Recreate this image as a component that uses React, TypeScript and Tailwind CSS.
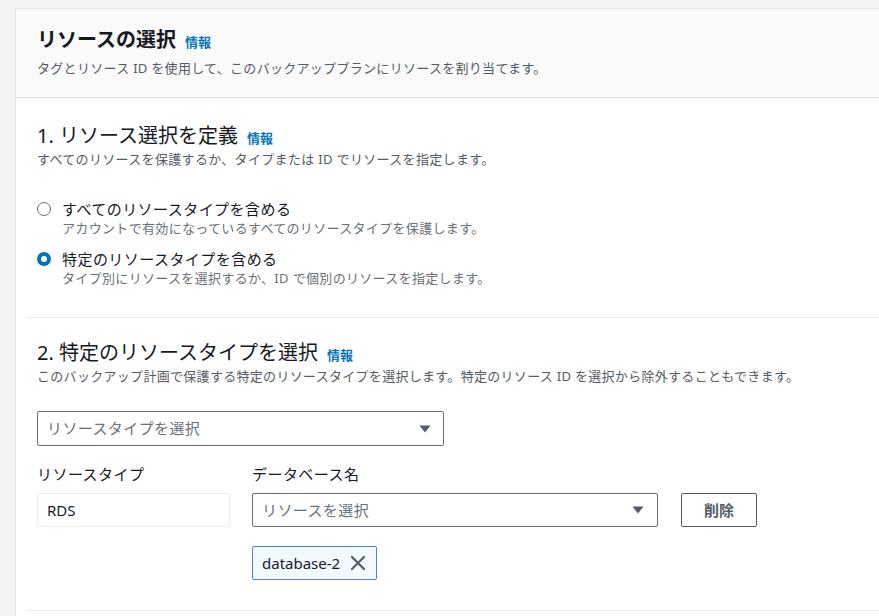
import React from "react";

const Info = () => (
  <a className="ml-[9px] text-[13px] font-bold text-[#0073bb] leading-none">情報</a>
);

const Caret = () => (
  <svg width="12" height="8" viewBox="0 0 12 8" className="shrink-0">
    <path d="M0.5 0.5 L11.5 0.5 L6 7.5 Z" fill="#545b64" />
  </svg>
);

export default function App() {
  return (
    <div className="min-h-screen bg-[#f2f3f3] pt-2 pl-[15px] font-['Noto_Sans','Noto_Sans_CJK_JP',sans-serif] text-[#16191f]">
      <div className="bg-white border-l border-t border-[#e4e7e7] min-h-[608px]">
        {/* header */}
        <div className="bg-[#fafafa] border-b border-[#e1e4e4] pl-[21px] pt-[17px] pb-[19px]">
          <div className="flex items-baseline h-[28px] leading-[28px]">
            <h2 className="text-[20px] font-bold">リソースの選択</h2>
            <Info />
          </div>
          <p className="mt-[4px] text-[13px] tracking-[0.3px] leading-[20px] text-[#545b64]">
            タグとリソース ID を使用して、このバックアップブランにリソースを割り当てます。
          </p>
        </div>

        {/* body */}
        <div className="pl-[10px] pt-[25px]">
          {/* section 1 */}
          <div className="pl-[11px] pb-[30px] border-b border-[#eaeded]">
            <div className="flex items-baseline h-[26px] leading-[26px]">
              <h3 className="text-[20px] font-normal">1. リソース選択を定義</h3>
              <Info />
            </div>
            <p className="text-[13px] tracking-[0.33px] leading-[20px] text-[#545b64]">
              すべてのリソースを保護するか、タイプまたは ID でリソースを指定します。
            </p>

            <div className="mt-[30px] flex flex-col gap-[12px]">
              <div className="flex">
                <div className="w-[25px] h-[20px] flex items-center">
                  <span className="block w-[14px] h-[14px] rounded-full border-[1.5px] border-[#687078] bg-white" />
                </div>
                <div>
                  <div className="text-[15px] tracking-[0.45px] leading-[20px]">すべてのリソースタイプを含める</div>
                  <div className="text-[13px] tracking-[0.33px] leading-[18px] text-[#687078]">
                    アカウントで有効になっているすべてのリソースタイプを保護します。
                  </div>
                </div>
              </div>
              <div className="flex">
                <div className="w-[25px] h-[20px] flex items-center">
                  <span className="block w-[14px] h-[14px] rounded-full border-[4px] border-[#0073bb] bg-white" />
                </div>
                <div>
                  <div className="text-[15px] tracking-[0.45px] leading-[20px]">特定のリソースタイプを含める</div>
                  <div className="text-[13px] tracking-[0.33px] leading-[18px] text-[#687078]">
                    タイプ別にリソースを選択するか、ID で個別のリソースを指定します。
                  </div>
                </div>
              </div>
            </div>
          </div>

          {/* section 2 */}
          <div className="pl-[11px] pt-[22px] pb-[30px] border-b border-[#eaeded]">
            <div className="flex items-baseline h-[26px] leading-[26px]">
              <h3 className="text-[20px] font-normal">2. 特定のリソースタイプを選択</h3>
              <Info />
            </div>
            <p className="text-[13px] tracking-[0.3px] leading-[20px] text-[#545b64]">
              このバックアップ計画で保護する特定のリソースタイプを選択します。特定のリソース ID を選択から除外することもできます。
            </p>

            <div className="mt-[25px] w-[407px] h-[35px] border border-[#687078] rounded-[2px] flex items-center justify-between pl-[9px] pr-[12px]">
              <span className="text-[15px] tracking-[0.4px] text-[#687078]">リソースタイプを選択</span>
              <Caret />
            </div>

            <div className="mt-[17px] flex gap-[22px]">
              <div className="w-[193px]">
                <div className="text-[15px] tracking-[0.45px] leading-[22px]">リソースタイプ</div>
                <div className="mt-[8px] h-[34px] border border-[#eaeded] rounded-[2px] flex items-center pl-[9px] text-[15px]">
                  RDS
                </div>
              </div>
              <div className="w-[406px]">
                <div className="text-[15px] tracking-[0.45px] leading-[22px]">データベース名</div>
                <div className="mt-[8px] h-[34px] border border-[#687078] rounded-[2px] flex items-center justify-between pl-[9px] pr-[13px]">
                  <span className="text-[15px] tracking-[0.4px] text-[#687078]">リソースを選択</span>
                  <Caret />
                </div>
                <div className="mt-[19px] inline-flex items-center h-[34px] w-[125px] border border-[#4a86c5] bg-[#f1faff] rounded-[2px] pl-[9px]">
                  <span className="text-[15px] text-[#16191f]">database-2</span>
                  <svg width="16" height="16" viewBox="0 0 16 16" className="ml-[10px]">
                    <path d="M2 2 L14 14 M14 2 L2 14" stroke="#545b64" strokeWidth="2.2" strokeLinecap="round" />
                  </svg>
                </div>
              </div>
              <div className="pt-[30px]">
                <button className="ml-px w-[76px] h-[34px] border border-[#545b64] rounded-[2px] bg-white text-[15px] font-bold text-[#545b64]">
                  削除
                </button>
              </div>
            </div>
          </div>
        </div>
      </div>
    </div>
  );
}
